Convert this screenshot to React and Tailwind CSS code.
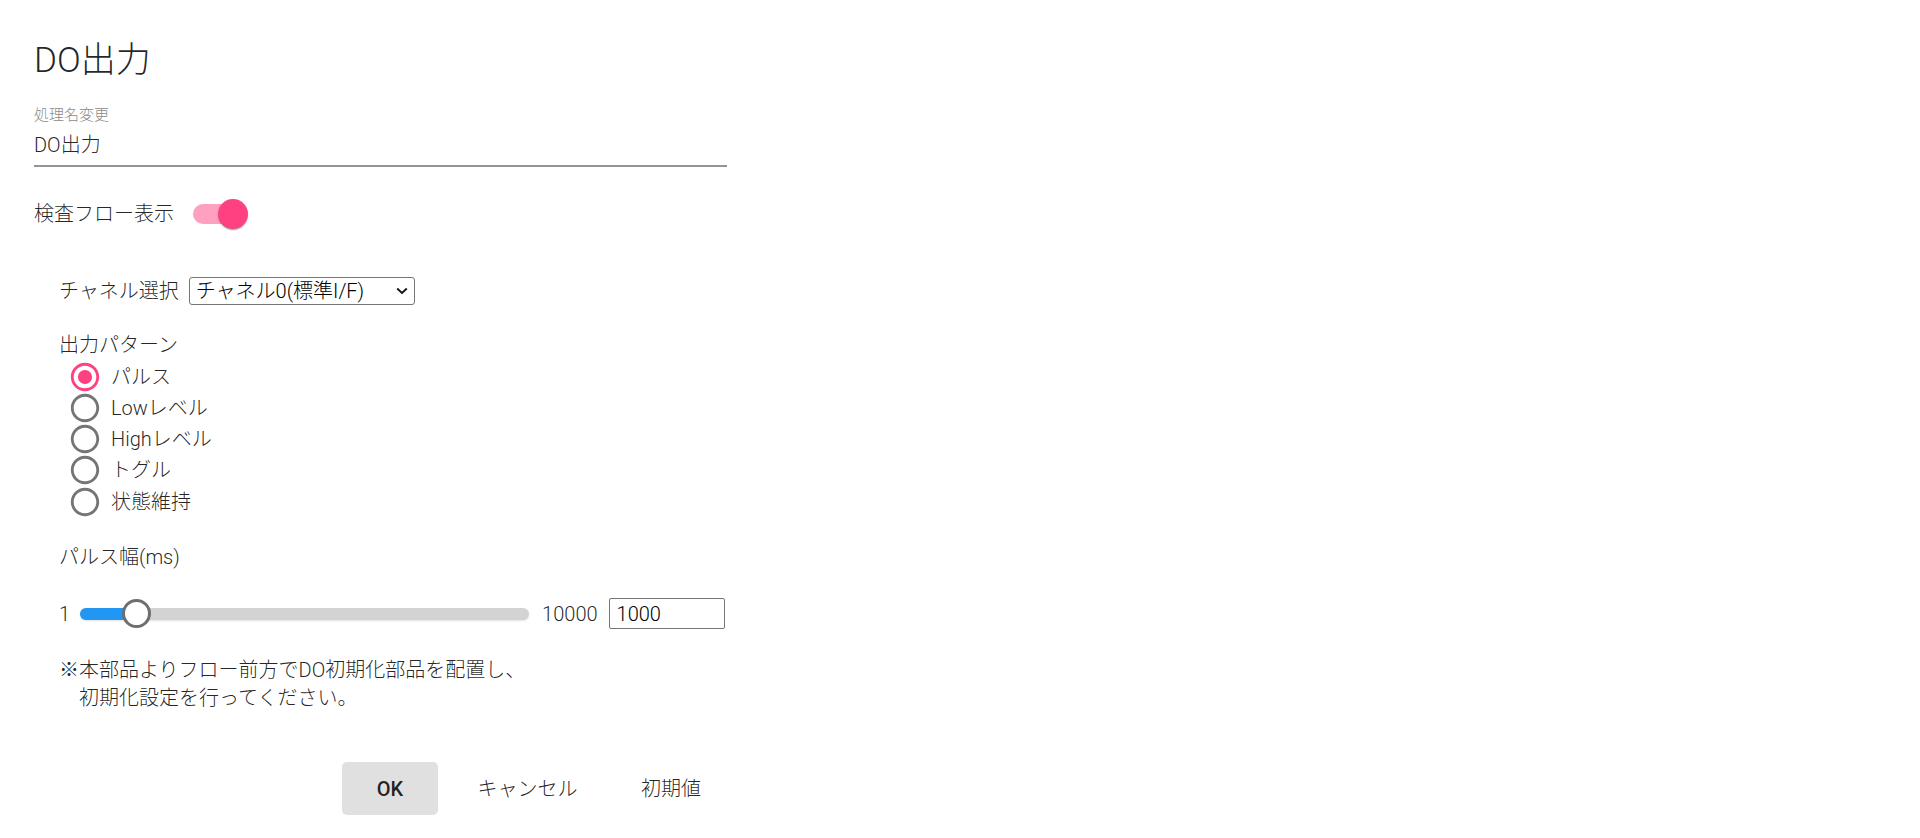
import React from "react";

function RadioIcon({ checked }) {
  const color = checked ? "#ff4081" : "#757575";
  return (
    <svg width="34" height="34" viewBox="0 0 24 24" className="shrink-0">
      <path
        fill={color}
        d="M12 2C6.48 2 2 6.48 2 12s4.48 10 10 10 10-4.48 10-10S17.52 2 12 2zm0 18c-4.42 0-8-3.58-8-8s3.58-8 8-8 8 3.58 8 8-3.58 8-8 8z"
      />
      {checked && <circle cx="12" cy="12" r="5" fill={color} />}
    </svg>
  );
}

function Slider({ min, max, value, width }) {
  const thumb = 29;
  const frac = (value - min) / (max - min);
  const center = thumb / 2 + frac * (width - thumb);
  return (
    <div className="relative h-[29px] shrink-0" style={{ width }}>
      <div className="absolute left-0 right-0 top-[8.5px] h-[12px] rounded-full bg-[#d3d3d3] shadow-[0_1px_2px_rgba(0,0,0,0.12)]" />
      <div
        className="absolute left-0 top-[8.5px] h-[12px] rounded-l-full bg-[#2196f3]"
        style={{ width: center }}
      />
      <div
        className="absolute top-0 h-[29px] w-[29px] rounded-full border-[3px] border-[#6e6e6e] bg-white"
        style={{ left: center - thumb / 2 }}
      />
    </div>
  );
}

export default function App() {
  const options = ["パルス", "Lowレベル", "Highレベル", "トグル", "状態維持"];
  return (
    <div className="min-h-screen w-full bg-white font-light text-[rgba(0,0,0,0.87)] font-[Roboto,'Noto_Sans_CJK_JP',sans-serif]">
      <div className="ml-[34px] w-[693px] pt-[40px]">
        <div className="h-[42px] text-[35px] leading-[42px]">DO出力</div>

        <div className="mt-[24px] text-[15px] leading-[18px] text-[#8a8a8a]">処理名変更</div>
        <div className="mt-[9px] border-b-2 border-[#949494] pb-[8px] text-[20px] leading-[24px]">
          DO出力
        </div>

        <div className="mt-[32px] flex h-[30px] items-center text-[20px]">
          <span>検査フロー表示</span>
          <div className="ml-[19px] flex h-[30px] w-[56px] items-center">
            <div className="h-[20px] w-[45px] shrink-0 rounded-full bg-[#ffa0c0]" />
            <div className="-ml-[20px] h-[30px] w-[30px] shrink-0 rounded-full bg-[#ff4081] shadow-[0_2px_1px_-1px_rgba(0,0,0,0.2),0_1px_1px_0_rgba(0,0,0,0.14),0_1px_3px_0_rgba(0,0,0,0.12)]" />
          </div>
        </div>

        <div className="pl-[25px] text-[20px]">
          <div className="mt-[48px] flex h-[28px] items-center">
            <span>チャネル選択</span>
            <div className="ml-[10px] flex h-[28px] w-[226px] items-center justify-between rounded-[3px] border border-[#767676] pl-[6px] pr-[6px] text-black">
              <span className="leading-[24px]">チャネル0(標準I/F)</span>
              <svg width="12" height="8" viewBox="0 0 12 8">
                <path d="M1.2 1.5 L6 6 L10.8 1.5" fill="none" stroke="#111" strokeWidth="1.8" />
              </svg>
            </div>
          </div>

          <div className="mt-[28px] leading-[24px]">出力パターン</div>
          <div className="mt-[4px] flex flex-col">
            {options.map((o, i) => (
              <div key={o} className="flex h-[31.25px] items-center">
                <div className="ml-[9px]">
                  <RadioIcon checked={i === 0} />
                </div>
                <span className="ml-[9px] leading-[24px]">{o}</span>
              </div>
            ))}
          </div>

          <div className="mt-[28px] leading-[24px]">パルス幅(ms)</div>

          <div className="mt-[29px] flex h-[31px] items-center">
            <span className="leading-[24px]">1</span>
            <div className="ml-[10px]">
              <Slider min={1} max={10000} value={1000} width={449} />
            </div>
            <span className="ml-[13px] leading-[24px]">10000</span>
            <div className="ml-[11px] flex h-[31px] w-[116px] items-center rounded-[2px] border border-[#767676] pl-[7px] text-black">
              1000
            </div>
          </div>

          <div className="mt-[27px] leading-[28px]">
            <div>※本部品よりフロー前方でDO初期化部品を配置し、</div>
            <div className="whitespace-pre">{"　初期化設定を行ってください。"}</div>
          </div>
        </div>

        <div className="mt-[50px] flex text-[20px]">
          <button className="ml-[308px] flex h-[53px] w-[96px] items-center justify-center rounded-[5px] bg-[#e0e0e0] font-medium">
            OK
          </button>
          <button className="ml-[8px] flex h-[53px] w-[163px] items-center justify-center rounded-[5px]">
            キャンセル
          </button>
          <button className="ml-[8px] flex h-[53px] w-[108px] items-center justify-center rounded-[5px]">
            初期値
          </button>
        </div>
      </div>
    </div>
  );
}
